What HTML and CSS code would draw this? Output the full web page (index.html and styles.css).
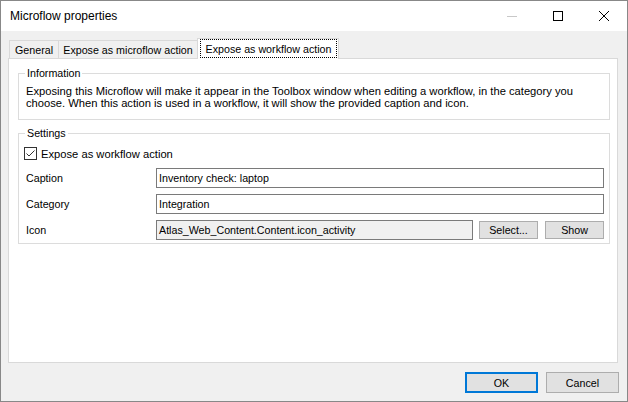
FILE: index.html
```html
<!DOCTYPE html>
<html>
<head>
<meta charset="utf-8">
<link rel="stylesheet" href="styles.css">
</head>
<body>
<div class="window">
  <div class="titlebar">
    <span class="title">Microflow properties</span>
    <div class="controls">
      <span class="ctl"><svg width="10" height="10" viewBox="0 0 10 10"><line x1="0" y1="5.5" x2="10" y2="5.5" stroke="#c8c8c8" stroke-width="1"/></svg></span>
      <span class="ctl"><svg width="10" height="10" viewBox="0 0 10 10"><rect x="0.5" y="0.5" width="9" height="9" fill="none" stroke="#000" stroke-width="1"/></svg></span>
      <span class="ctl"><svg width="10" height="10" viewBox="0 0 10 10"><path d="M0 0L10 10M10 0L0 10" stroke="#000" stroke-width="1"/></svg></span>
    </div>
  </div>
  <div class="body">
    <div class="tabs">
      <div class="tab t1">General</div>
      <div class="tab t2">Expose as microflow action</div>
      <div class="tab active"><span class="focus">Expose as workflow action</span></div>
    </div>
    <div class="panel">
      <fieldset class="group info">
        <legend>Information</legend>
        <p class="desc">Exposing this Microflow will make it appear in the Toolbox window when editing a workflow, in the category you<br>choose. When this action is used in a workflow, it will show the provided caption and icon.</p>
      </fieldset>
      <fieldset class="group settings">
        <legend>Settings</legend>
        <div class="check">
          <svg class="box" width="13" height="13" viewBox="0 0 13 13"><rect x="0.5" y="0.5" width="12" height="12" fill="#fff" stroke="#333"/><path d="M2.5 6.5L5 9L10.5 3.5" fill="none" stroke="#333" stroke-width="1"/></svg>
          <span>Expose as workflow action</span>
        </div>
        <div class="form">
          <span class="lbl">Caption</span>
          <div class="input">Inventory check: laptop</div>
          <span class="lbl">Category</span>
          <div class="input">Integration</div>
          <span class="lbl">Icon</span>
          <div class="iconrow">
            <div class="input ro">Atlas_Web_Content.Content.icon_activity</div>
            <button class="btn sel">Select...</button>
            <button class="btn show">Show</button>
          </div>
        </div>
      </fieldset>
    </div>
    <div class="footer">
      <button class="btn big ok">OK</button>
      <button class="btn big cancel">Cancel</button>
    </div>
  </div>
</div>
</body>
</html>
```
FILE: styles.css
```css
* { box-sizing: border-box; }
html, body { margin: 0; padding: 0; background: #fff; }
body { font-family: "Liberation Sans", Arial, sans-serif; font-size: 10.7px; color: #000; }

.window {
  width: 628px;
  height: 402px;
  border: 1px solid #888;
  background: #f0f0f0;
  display: flex;
  flex-direction: column;
}

.titlebar {
  height: 30px;
  background: #fff;
  display: flex;
  align-items: center;
  padding-left: 9px;
}
.title { font-size: 12px; flex: 1; }
.controls { display: flex; height: 30px; }
.ctl {
  width: 46px;
  height: 30px;
  display: flex;
  align-items: center;
  justify-content: center;
}
.ctl svg { display: block; }

.body {
  flex: 1;
  display: flex;
  flex-direction: column;
  padding: 7px 9px 0 7px;
}

.tabs {
  height: 20px;
  display: flex;
  align-items: flex-end;
  padding-left: 1px;
}
.tab {
  height: 18px;
  border: 1px solid #d9d9d9;
  border-bottom: none;
  background: #f0f0f0;
  display: flex;
  align-items: center;
  justify-content: center;
  margin-left: -1px;
  white-space: nowrap;
}
.t1 { width: 50px; margin-left: 0; }
.t2 { width: 140px; }
.tab.active {
  width: 142px;
  height: 21px;
  margin-bottom: -1px;
  background: #fff;
  position: relative;
  z-index: 1;
  align-items: stretch;
}
.focus {
  flex: 1;
  margin: 0 1px 1px 2px;
  border: 1px dotted #000;
  display: flex;
  align-items: center;
  justify-content: center;
}

.panel {
  height: 305px;
  border: 1px solid #d9d9d9;
  background: #fff;
  padding: 0 7px 0 9px;
}

.group {
  margin: 0;
  border: 1px solid #dcdcdc;
  min-width: 0;
}
.group legend {
  line-height: 14px;
  padding: 0 2px;
  margin-left: -1px;
}
.info { margin-top: 7px; padding: 5px 7px 10px 7px; }
.desc { margin: 0; line-height: 12px; font-size: 11.2px; white-space: nowrap; }

.settings { margin-top: 6px; padding: 7px 5px 3px 7px; }
.check {
  display: flex;
  align-items: center;
  height: 13px;
  margin-left: -2px;
  font-size: 11.2px;
}
.check .box { display: block; margin-right: 4px; }

.form {
  margin-top: 8px;
  display: grid;
  grid-template-columns: 130px 1fr;
  grid-auto-rows: 20px;
  row-gap: 6px;
  align-items: center;
}
.input {
  height: 20px;
  border: 1px solid #7a7a7a;
  background: #fff;
  padding-left: 2px;
  display: flex;
  align-items: center;
  white-space: nowrap;
  overflow: hidden;
}
.input.ro { background: #f0f0f0; width: 317px; }
.iconrow { display: flex; align-items: center; height: 20px; }

.btn {
  font-family: inherit;
  font-size: 10.7px;
  color: #000;
  background: #e1e1e1;
  border: 1px solid #adadad;
  padding: 0;
  margin: 0;
  height: 18px;
  width: 59px;
}
.sel { margin-left: 6px; }
.show { margin-left: 7px; }

.footer {
  display: flex;
  justify-content: flex-end;
  padding: 9px 0 8px 0;
  margin-right: -1px;
}
.btn.big { height: 21px; width: 73px; }
.ok { border: 2px solid #0078d7; }
.cancel { margin-left: 8px; }
```
